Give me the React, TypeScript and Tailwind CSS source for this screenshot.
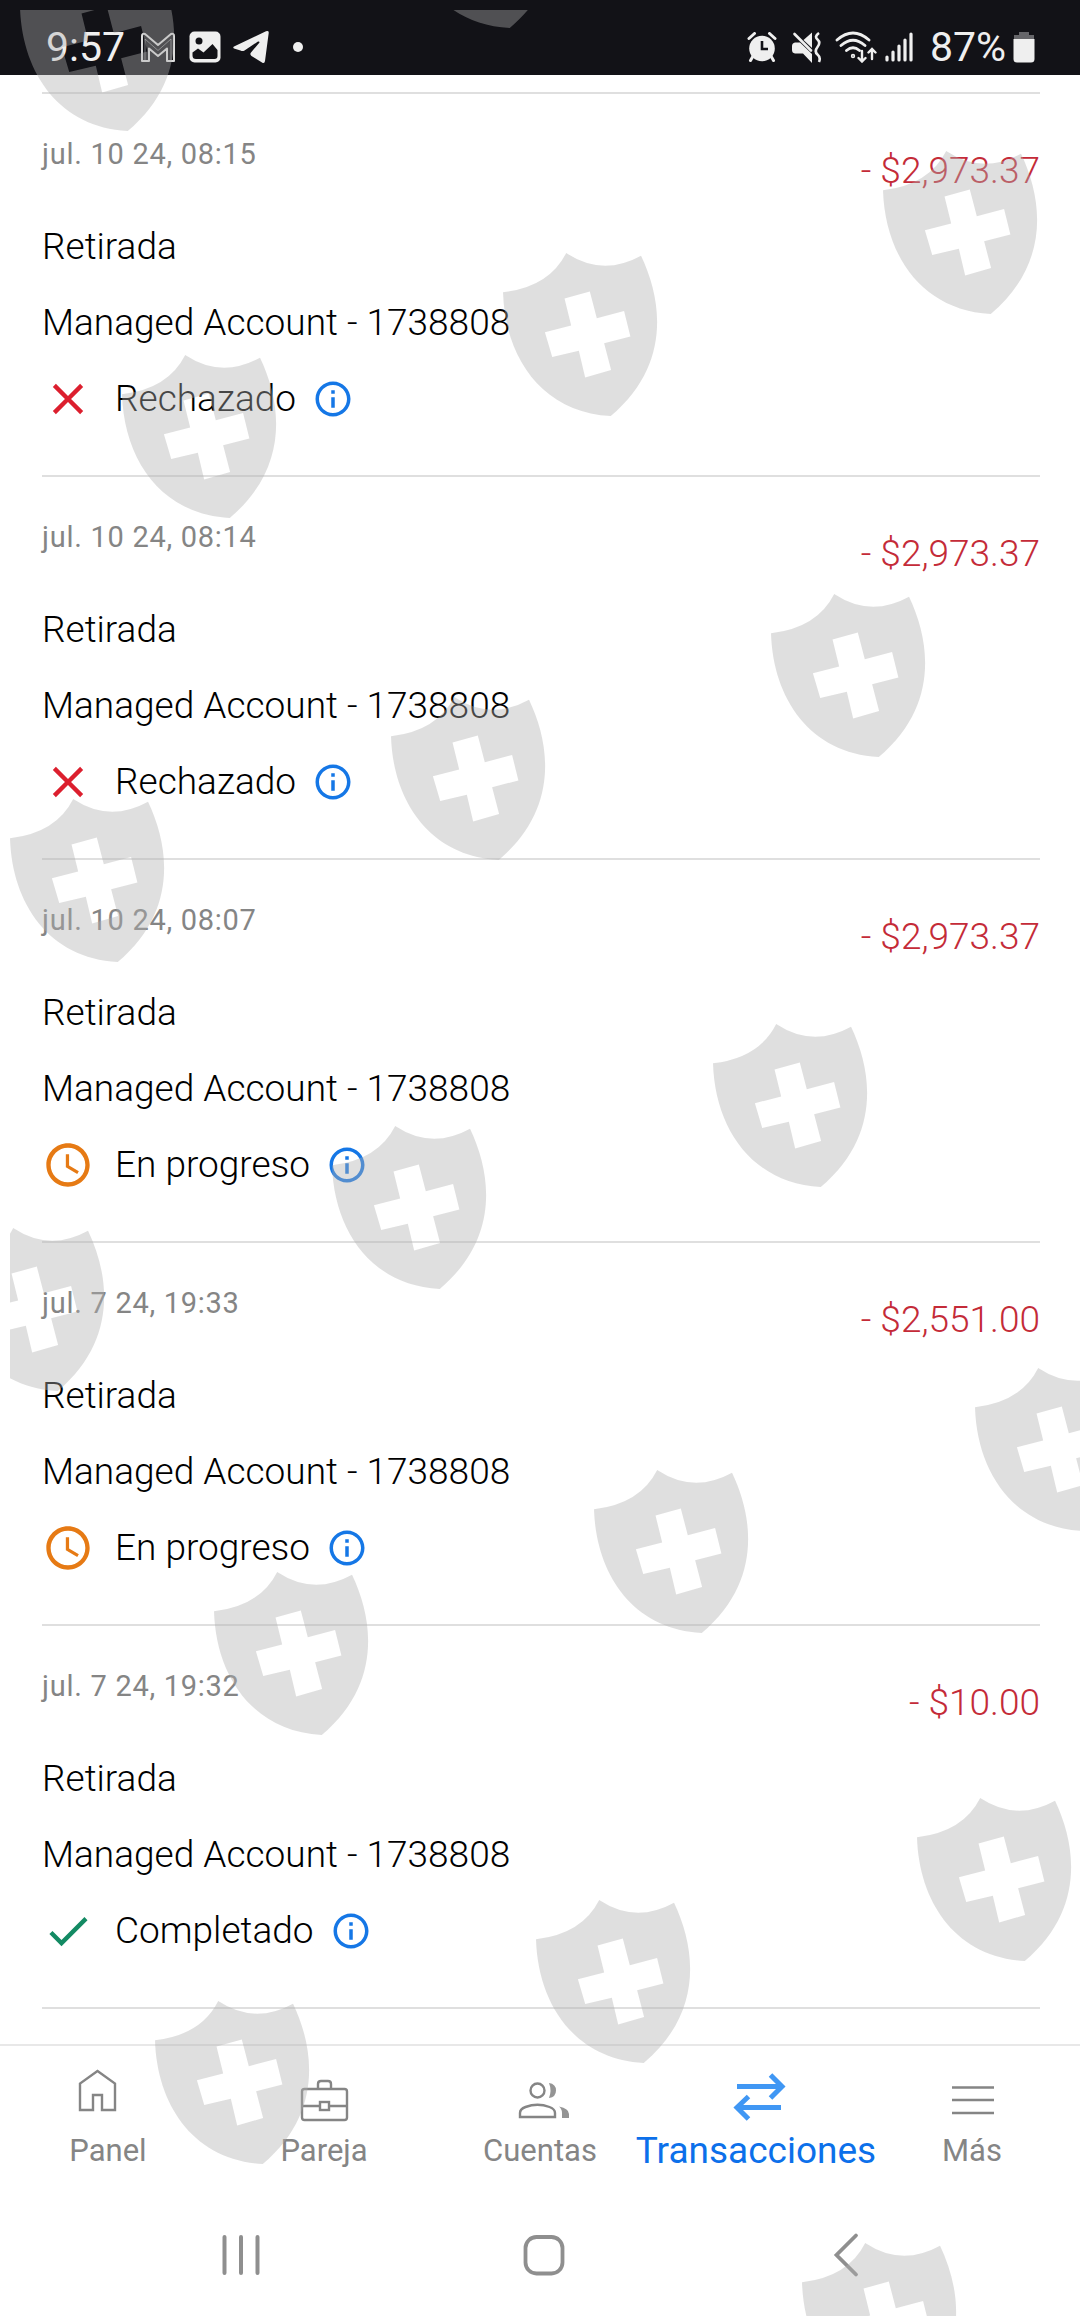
import type { ReactNode } from "react";
import { MdAccessTime, MdCheck, MdClose, MdInfoOutline } from "react-icons/md";

type Status = "rejected" | "pending" | "done";

const transactions: { date: string; amount: string; status: Status }[] = [
  { date: "jul. 10 24, 08:15", amount: "- $2,973.37", status: "rejected" },
  { date: "jul. 10 24, 08:14", amount: "- $2,973.37", status: "rejected" },
  { date: "jul. 10 24, 08:07", amount: "- $2,973.37", status: "pending" },
  { date: "jul. 7 24, 19:33", amount: "- $2,551.00", status: "pending" },
  { date: "jul. 7 24, 19:32", amount: "- $10.00", status: "done" },
];

const statusInfo: Record<Status, { label: string; icon: ReactNode }> = {
  rejected: { label: "Rechazado", icon: <MdClose className="size-[52px] text-[#dc1f2e]" /> },
  pending: { label: "En progreso", icon: <MdAccessTime className="size-[52px] text-[#e67a14]" /> },
  done: { label: "Completado", icon: <MdCheck className="size-[52px] text-[#138a63]" /> },
};

// Free positions of the shields, measured inside the watermark layer.
const shields = [
  [10, -42], [392, -145], [873, 141], [493, 243], [112, 345],
  [761, 584], [381, 687], [0, 789], [703, 1014], [322, 1116],
  [-60, 1218], [965, 1358], [584, 1460], [204, 1562], [907, 1788],
  [526, 1890], [145, 1991], [792, 2233],
];

function Watermark() {
  return (
    <div className="pointer-events-none absolute top-[10px] right-0 bottom-0 left-[10px] overflow-hidden" aria-hidden="true">
      {shields.map(([left, top]) => (
        <svg
          key={`${left}-${top}`}
          className="absolute h-[163px] w-[155px] fill-[#b0b0b0]/40"
          style={{ left, top }}
          viewBox="98 71 466 490"
        >
          <path
            fillRule="evenodd"
            d="M98 189Q237 173 288 71Q397 143 513 79C580 220 600 410 422 561C215 550 104 385 98 189ZM283 208L303 289L224 309L246 384L326 365L345 445L423 423L402 342L481 322L462 245L380 267L359 187Z"
          />
        </svg>
      ))}
    </div>
  );
}

function StatusBar() {
  return (
    <header className="flex items-center justify-between bg-[#121217] pt-[19px] pr-[45px] pl-[46px] text-[41px] leading-[56px] text-[#efefef]">
      <div className="flex items-center">
        <span>9:57</span>
        <svg className="ml-[15px] h-8 w-9" viewBox="0 0 36 32" fill="none" stroke="#dcdcdc" strokeWidth="2" strokeLinejoin="round">
          <path d="M2 30V5Q2 2 5 3L18 14L31 3Q34 2 34 5V30H27V17.500L18 25L9 17.500V30Z" />
          <path d="M5 30V8L18 19.500L31 8V30" strokeWidth="1" stroke="#dcdcdc" opacity="0.500" />
        </svg>
        <svg className="ml-[13px] size-8" viewBox="0 0 32 32">
          <rect x="0.500" y="0.500" width="31" height="31" rx="5" fill="#efefef" />
          <circle cx="10" cy="10" r="3.500" fill="#121217" />
          <path d="M3.500 21.500L9 17.500L14.500 21.500L23.500 13L28.500 19V25Q28.500 28 25.500 28H7Q3.500 28 3.500 24.500Z" fill="#121217" />
        </svg>
        <svg className="ml-3 h-8 w-9" viewBox="0 0 36 32" fill="#efefef">
          <path d="M1 15.500L33 0.300Q36 -0.500 35.700 2L32 30Q31.500 33 29 31.500L18.500 25Q16.500 23.500 18 21.500L26.500 11.500Q26.500 10 25 10.500L11.500 19.500Q9.500 20.500 7.500 19.500L1 17.500Q-0.500 16.500 1 15.500Z" />
        </svg>
        <span className="ml-6 size-[10px] rounded-full bg-[#efefef]" />
      </div>
      <div className="flex items-center">
        <svg className="h-[30px] w-[30px]" viewBox="0 0 30 30" fill="#efefef">
          <circle cx="15" cy="16.500" r="12.800" />
          <path d="M2 6.500L7.500 1.500M28 6.500L22.500 1.500M5.500 25L3.500 28.500M24.500 25L26.500 28.500" stroke="#efefef" strokeWidth="3" strokeLinecap="round" />
          <path d="M15 9V17H21" fill="none" stroke="#121217" strokeWidth="2.600" />
        </svg>
        <svg className="ml-[14px] h-[31px] w-[31px]" viewBox="0 0 31 31" fill="#efefef">
          <path d="M1 14Q1 11 4 10.500H9L21 22V31L12 21.500H4Q1 21 1 18ZM12.500 8L21 0.500V16Z" />
          <path d="M3.500 2L20 18.500" stroke="#efefef" strokeWidth="2.600" strokeLinecap="round" />
          <path d="M28 1Q23 4.500 26.500 7.500T26.500 15T26.500 22.500T28 30" fill="none" stroke="#efefef" strokeWidth="2.600" />
        </svg>
        <svg className="ml-[13px] h-8 w-[42px]" viewBox="0 0 42 32" fill="none" stroke="#efefef" strokeWidth="2.800" strokeLinecap="round">
          <path d="M2 9Q18 -5 34 9M6 14.500Q18 4 30 14.500M11.500 19.500Q18 14 24.500 19.500" />
          <circle cx="18" cy="25" r="0.800" />
          <path d="M27 20V30M23.500 27L27 30.500L30.500 27M37 28V18.500M33.500 21.500L37 18L40.500 21.500" strokeWidth="2.400" />
        </svg>
        <svg className="ml-2 h-[30px] w-[28px]" viewBox="0 0 28 30" stroke="#efefef" strokeWidth="3.200" strokeLinecap="round">
          <path d="M2 25V28M8 20V28M14 14V28M20 8V28M26 2V28" />
        </svg>
        <span className="ml-[17px]">87%</span>
        <svg className="ml-[7px] h-8 w-[22px]" viewBox="0 0 22 32">
          <path d="M6 1H16V4H21V9H1V4H6Z" fill="#66666a" />
          <path d="M0.500 8H21.500V28Q21.500 31.500 18 31.500H4Q0.500 31.500 0.500 28Z" fill="#efefef" />
        </svg>
      </div>
    </header>
  );
}

const tabs: { label: string; active?: boolean; icon: ReactNode }[] = [
  {
    label: "Panel",
    icon: <path d="M2 42V15.500L19.500 3L37 15.500V42H24V27H15V42Z" />,
  },
  {
    label: "Pareja",
    icon: (
      <>
        <rect x="8" y="21" width="45" height="31" rx="2.500" />
        <path d="M24 21V16Q24 13 27 13H34Q37 13 37 16V21M8 38H26M35 38H53" />
        <rect x="26" y="34" width="9" height="8" />
      </>
    ),
  },
  {
    label: "Cuentas",
    icon: (
      <>
        <circle cx="27.500" cy="22.500" r="7" />
        <path d="M10 49V45Q10 41 15.500 39Q27.500 34.500 39.500 39Q45 41 45 45V49Z" />
        <path d="M39 15Q46 16 46 22.500T39 30Q42 22.500 39 15ZM49 38.500Q59 40.500 59 46V50H52V45Q52 41 49 38.500Z" fill="#949494" stroke="none" />
      </>
    ),
  },
  {
    label: "Transacciones",
    active: true,
    icon: <path d="M11 18.500H56M44.500 7L56 18.500L44.500 30M55 39.500H11M22.500 28.500L11 39.500L22.500 51" stroke="#4097f4" strokeWidth="5" />,
  },
  {
    label: "Más",
    icon: <path d="M10 19.500H52M10 32H52M10 45H52" />,
  },
];

function TabBar() {
  return (
    <nav className="grid grid-cols-5 border-t-2 border-[#e8e8e8] pt-[22px] pb-[23px]">
      {tabs.map((tab) => (
        <a key={tab.label} href="#" className="flex flex-col items-center gap-[7px]" aria-current={tab.active ? "page" : undefined}>
          <svg className="h-14 w-[60px]" viewBox="0 0 60 56" fill="none" stroke="#858585" strokeWidth="2.400">
            {tab.icon}
          </svg>
          <span className={tab.active ? "text-[37px] leading-10 text-[#0c70ea]" : "text-[31px] leading-10 text-[#858585]"}>
            {tab.label}
          </span>
        </a>
      ))}
    </nav>
  );
}

function SystemBar() {
  return (
    <div className="flex items-center justify-between pt-[31px] pr-[204px] pb-[31px] pl-[211px]">
      <button type="button" aria-label="Recientes">
        <svg className="h-[60px] w-[60px]" viewBox="0 0 60 60" stroke="#8f8f8f" strokeWidth="4" strokeLinecap="round">
          <path d="M13.500 12V48M30 12V48M46.500 12V48" />
        </svg>
      </button>
      <button type="button" aria-label="Inicio">
        <svg className="h-[60px] w-[60px]" viewBox="0 0 60 60" fill="none" stroke="#8f8f8f" strokeWidth="3.800">
          <rect x="11.500" y="12" width="37" height="36.500" rx="11" />
        </svg>
      </button>
      <button type="button" aria-label="Atrás">
        <svg className="h-[60px] w-[60px]" viewBox="0 0 60 60" fill="none" stroke="#8f8f8f" strokeWidth="3.800" strokeLinecap="round">
          <path d="M40 10.500L20.500 30L40 49.500" />
        </svg>
      </button>
    </div>
  );
}

export default function App() {
  return (
    <div className="relative flex min-h-screen flex-col overflow-hidden bg-white font-['Roboto',sans-serif]">
      <StatusBar />
      <main className="flex-1 pt-[17px] pr-10 pb-[35px] pl-[42px]">
        <ul className="border-b-2 border-[#dfdfdf] text-[37px] font-light text-black">
          {transactions.map((item) => {
            const status = statusInfo[item.status];
            return (
              <li key={item.date} className="flex items-start justify-between border-t-2 border-[#dfdfdf] pt-10 pb-[38px]">
                <div>
                  <time className="mb-[35px] block text-[29px] leading-10 font-normal tracking-wide text-[#858585]">{item.date}</time>
                  <p className="leading-[76px]">Retirada</p>
                  <p className="leading-[76px]">Managed Account - 1738808</p>
                  <div className="flex items-center leading-[76px]">
                    {status.icon}
                    <span className="ml-[21px]">{status.label}</span>
                    <button type="button" className="ml-4 text-[#1577e6]" aria-label="Más información">
                      <MdInfoOutline className="size-[42px]" />
                    </button>
                  </div>
                </div>
                <span className="leading-[74px] text-[#c42b38]">{item.amount}</span>
              </li>
            );
          })}
        </ul>
      </main>
      <TabBar />
      <SystemBar />
      <Watermark />
    </div>
  );
}
